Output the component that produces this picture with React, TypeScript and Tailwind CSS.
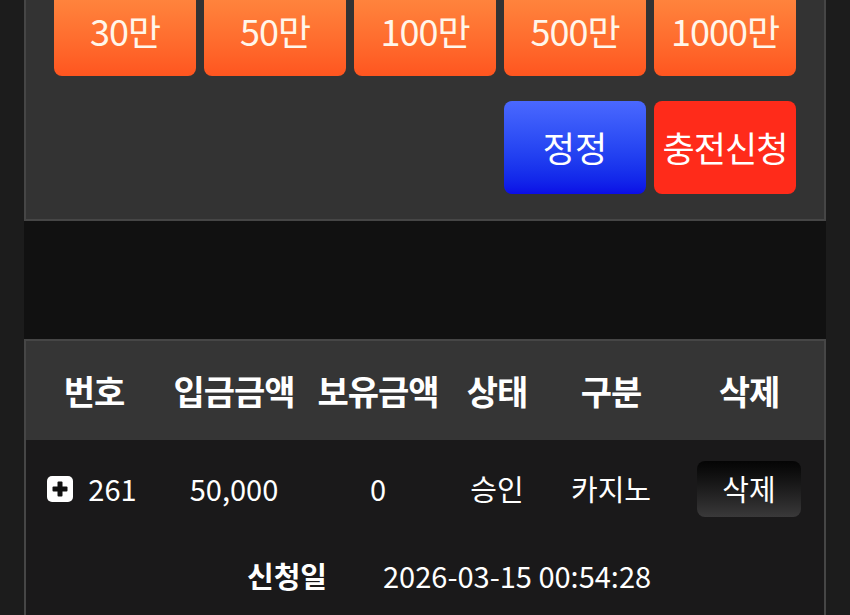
import React from "react";

const amounts = ["30만", "50만", "100만", "500만", "1000만"];

const columns = ["번호", "입금금액", "보유금액", "상태", "구분", "삭제"];

// shared column template for header and rows
const cols = "grid-cols-[136px_144px_144px_94px_134px_142px]";

function PlusBox() {
  return (
    <svg width="26" height="26" viewBox="0 0 26 26">
      <rect x="0" y="0" width="26" height="26" rx="5" fill="#ffffff" />
      <rect x="5.5" y="10.5" width="15" height="5" rx="1" fill="#111111" />
      <rect x="10.5" y="5.5" width="5" height="15" rx="1" fill="#111111" />
    </svg>
  );
}

function App() {
  return (
    <div
      className="h-[615px] w-[850px] overflow-hidden bg-[#1c1c1c] px-[24px]"
      style={{ fontFamily: '"Noto Sans CJK KR", "Noto Sans", sans-serif' }}
    >
      <div className="flex h-full flex-col bg-[#111111]">
        {/* charge panel */}
        <section className="-mt-[27px] border-x-2 border-b-2 border-[#464646] bg-[#333333] px-[28px] pb-[25px] pt-[10px]">
          <div className="grid grid-cols-5 gap-[8px]">
            {amounts.map((a) => (
              <button
                key={a}
                className="flex h-[93px] items-center justify-center rounded-[8px] bg-gradient-to-b from-[#ff8c42] to-[#ff551f] pt-[1px] text-[36px] tracking-[-1px] text-[#fff6ea]"
              >
                {a}
              </button>
            ))}
          </div>
          <div className="mt-[25px] flex justify-end gap-[8px]">
            <button className="flex h-[93px] w-[142px] items-center justify-center rounded-[8px] bg-gradient-to-b from-[#4a68ff] to-[#0c0ce6] text-[35px] text-white">
              정정
            </button>
            <button className="flex h-[93px] w-[142px] items-center justify-center rounded-[8px] bg-[#ff2b1a] text-[35px] tracking-[-1px] text-white">
              충전신청
            </button>
          </div>
        </section>

        {/* history table */}
        <section className="mt-[118px] flex-1 border-x-2 border-t-2 border-[#464646] bg-[#1a191a]">
          <div className={`grid h-[99px] ${cols} items-center bg-[#353535] text-[34px] font-bold text-white`}>
            {columns.map((c) => (
              <div key={c} className="text-center tracking-[-1px]">
                {c}
              </div>
            ))}
          </div>
          <div className={`grid h-[98px] ${cols} items-center text-[29px] text-white`}>
            <div className="flex items-center justify-center gap-[15px] pr-[4px]">
              <PlusBox />
              <span>261</span>
            </div>
            <div className="text-center">50,000</div>
            <div className="text-center">0</div>
            <div className="text-center">승인</div>
            <div className="text-center">카지노</div>
            <div className="flex justify-center">
              <button className="flex h-[56px] w-[104px] items-center justify-center rounded-[8px] bg-gradient-to-b from-[#050505] to-[#3a393a] text-[29px] text-white">
                삭제
              </button>
            </div>
          </div>
          <div className="flex items-center pl-[221px] pt-[16px] text-[29px] text-white">
            <span className="w-[136px] font-bold">신청일</span>
            <span>2026-03-15 00:54:28</span>
          </div>
        </section>
      </div>
    </div>
  );
}

export default App;
